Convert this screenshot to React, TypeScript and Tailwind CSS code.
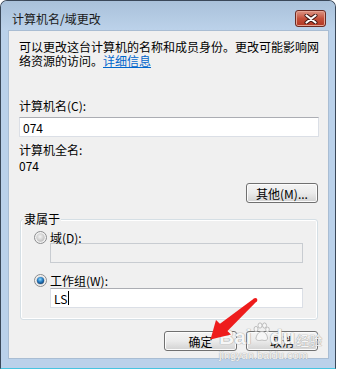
import React from "react";

// Win7 风格的单选按钮
const Radio = ({ checked }: { checked?: boolean }) => (
  <svg width="13" height="13" viewBox="0 0 13 13" className="shrink-0">
    <defs>
      <radialGradient id="radioOff" cx="45%" cy="40%" r="65%">
        <stop offset="0" stopColor="#f4f4f4" />
        <stop offset="1" stopColor="#bababa" />
      </radialGradient>
      <radialGradient id="radioOn" cx="45%" cy="35%" r="70%">
        <stop offset="0" stopColor="#8fdcff" />
        <stop offset="0.5" stopColor="#2a7fc4" />
        <stop offset="1" stopColor="#0b3566" />
      </radialGradient>
    </defs>
    <circle cx="6.5" cy="6.5" r="6" fill="#f2f2f2" stroke="#8b8c8e" strokeWidth="1" />
    <circle cx="6.5" cy="6.5" r="4.2" fill="url(#radioOff)" />
    {checked && <circle cx="6.5" cy="6.5" r="3.6" fill="url(#radioOn)" />}
  </svg>
);

const Button = ({ label, width }: { label: string; width: string }) => (
  <div
    className={`${width} h-[20px] rounded-[3px] border border-[#707070] bg-gradient-to-b from-[#f4f4f4] via-[#ebebeb] to-[#d2d2d2] shadow-[inset_0_0_0_1px_#fcfcfc] flex items-center justify-center text-[12px] leading-[13px] text-black`}
  >
    {label}
  </div>
);

const TextBox = ({ children, width, disabled }: { children?: React.ReactNode; width: string; disabled?: boolean }) => (
  <div
    className={`${width} h-[20px] border flex items-center pl-[3px] text-[12px] leading-[13px] text-black ${
      disabled
        ? "bg-[#f0f0f0] border-[#c8ccd1]"
        : "bg-white border-[#dbdfe6] border-t-[#abadb3]"
    }`}
  >
    {children}
  </div>
);

export default function App() {
  return (
    <div className="relative w-[337px] h-[370px] bg-white overflow-hidden font-['Noto_Sans_CJK_SC','Liberation_Sans',sans-serif]">
      {/* 窗口 */}
      <div className="w-[336px] h-[369px] rounded-t-[7px] border border-[#3a4859] border-b-[#47c5e0] bg-[#bad1ea] flex flex-col">
        {/* 标题栏 */}
        <div className="h-[29px] flex items-start rounded-t-[6px] bg-gradient-to-b from-[#a9c1da] to-[#bcd2ea]">
          <div className="pl-[11px] pt-[11px] text-[12px] leading-[13px] text-[#1a1a1a]">计算机名/域更改</div>
          <div className="ml-auto mt-[9px] mr-[9px] w-[31px] h-[17px] rounded-[3px] border border-[#6b2a22] bg-gradient-to-b from-[#dc9585] via-[#c4503b] to-[#b03622] shadow-[inset_0_0_0_1px_#e5a393] flex items-center justify-center">
            <svg width="14" height="10" viewBox="0 0 14 10">
              <path d="M2.5 1.5 L11.5 8.5 M11.5 1.5 L2.5 8.5" stroke="#3a1410" strokeWidth="4" strokeLinecap="round" />
              <path d="M2.5 1.5 L11.5 8.5 M11.5 1.5 L2.5 8.5" stroke="#ffffff" strokeWidth="2.2" strokeLinecap="round" />
            </svg>
          </div>
        </div>

        {/* 客户区 */}
        <div className="ml-[7px] mr-[6px] h-[329px] bg-[#f0f0f0] border border-[#a9bdd3] flex flex-col pl-[10px] pr-[9px] pt-[9px] text-[12px] leading-[13px] text-black">
          <p className="leading-[14px]">
            可以更改这台计算机的名称和成员身份。更改可能影响网
            <br />
            络资源的访问。<span className="text-[#0066cc] underline">详细信息</span>
          </p>

          <div className="mt-[31px]">计算机名(C):</div>
          <div className="mt-[5px]">
            <TextBox width="w-[300px]">074</TextBox>
          </div>

          <div className="mt-[6px]">计算机全名:</div>
          <div className="mt-[3px]">074</div>

          <div className="mt-[11px] self-end mr-[1px]">
            <Button label="其他(M)..." width="w-[72px]" />
          </div>

          {/* 隶属于 */}
          <div className="relative mt-[16px] ml-[1px] w-[298px] rounded-[3px] border border-[#d5dfe5] shadow-[inset_0_0_0_1px_#ffffff] pl-[13px] pt-[11px] pb-[11px]">
            <div className="absolute -top-[8px] left-[2px] px-[1px] bg-[#f0f0f0]">隶属于</div>
            <div className="flex items-center gap-[3px] h-[12px]">
              <Radio />
              <span>域(D):</span>
            </div>
            <div className="ml-[16px]">
              <TextBox width="w-[253px]" disabled />
            </div>
            <div className="mt-[11px] flex items-center gap-[3px] h-[13px]">
              <Radio checked />
              <span>工作组(W):</span>
            </div>
            <div className="mt-[1px] ml-[16px]">
              <TextBox width="w-[253px]">
                LS<span className="ml-[1px] w-[1px] h-[14px] bg-black" />
              </TextBox>
            </div>
          </div>

          <div className="mt-[11px] flex justify-end gap-[9px] mr-[1px]">
            <Button label="确定" width="w-[73px]" />
            <Button label="取消" width="w-[72px]" />
          </div>
        </div>
      </div>

      {/* 百度经验水印 */}
      <div className="absolute left-[219px] top-[322px] pointer-events-none flex items-end font-['Liberation_Sans',sans-serif] text-[#f6f6f6] [text-shadow:0_0_1px_#9c9c9c,0_0_1px_#9c9c9c]">
        <span className="text-[21px] leading-[22px] font-bold">Bai</span>
        <svg width="18" height="20" viewBox="0 0 18 20" className="mb-[6px]">
          <g fill="#f6f6f6" stroke="#b0b0b0" strokeWidth="0.8">
            <ellipse cx="4" cy="7" rx="2" ry="2.6" />
            <ellipse cx="8" cy="3.5" rx="2" ry="2.6" />
            <ellipse cx="12.5" cy="3.5" rx="2" ry="2.6" />
            <ellipse cx="15.5" cy="7.5" rx="1.8" ry="2.4" />
            <path d="M4 16 C5 11 8 9.5 10 9.5 C12.5 9.5 15 12 15.5 16 C15.8 18.5 13 19 10 18 C7 19 3.5 18.5 4 16 Z" />
          </g>
        </svg>
        <span className="text-[21px] leading-[22px] font-bold">du</span>
        <span className="ml-[1px] text-[13px] leading-[16px] font-['Noto_Sans_CJK_SC',sans-serif]">经验</span>
      </div>
      <div className="absolute left-[219px] top-[349px] pointer-events-none font-['Liberation_Sans',sans-serif] text-[11px] leading-[12px] text-[#f6f6f6] [text-shadow:0_0_1px_#a8a8a8,0_0_1px_#a8a8a8]">
        jingyan.baidu.com
      </div>

      {/* 红色箭头 */}
      <svg className="absolute left-0 top-0 pointer-events-none" width="337" height="370" viewBox="0 0 337 370">
        <path d="M254 298.5 L256.8 301.3 L226.5 332 L219 324.5 Z" fill="#ee1c1c" />
        <circle cx="255.4" cy="299.9" r="2" fill="#ee1c1c" />
        <path d="M210.5 339.5 L216 320 L231 334.5 Z" fill="#ee1c1c" />
      </svg>
    </div>
  );
}
